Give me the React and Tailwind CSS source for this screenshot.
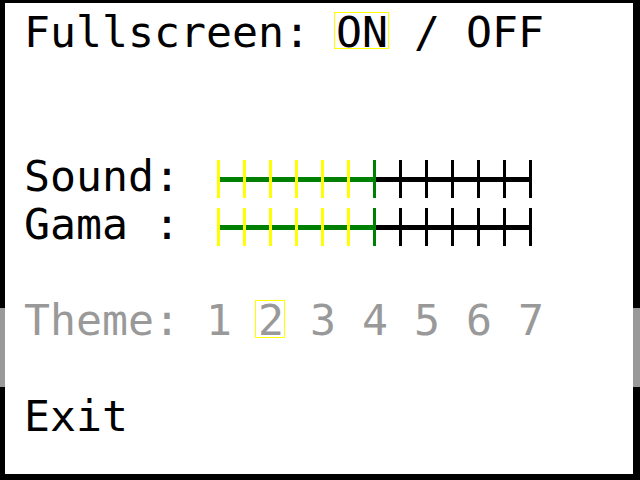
import React from "react";

function Slider() {
  const ticks = Array.from({ length: 13 }, (_, k) => k);
  const color = (k) => (k < 6 ? "#ffff00" : k === 6 ? "#008000" : "#000000");
  return (
    <svg width="315" height="38" viewBox="0 0 315 38" className="mt-[8px] block">
      <rect x="0" y="17" width="159" height="5" fill="#008000" />
      <rect x="159" y="17" width="156" height="5" fill="#000000" />
      {ticks.map((k) => (
        <rect key={k} x={k * 26} y="0" width="3" height="38" fill={color(k)} />
      ))}
    </svg>
  );
}

function Row({ children, className = "" }) {
  return <div className={"h-[48px] " + className}>{children}</div>;
}

export default function App() {
  const font = { fontFamily: '"DejaVu Sans Mono", "Liberation Mono", monospace' };
  const themes = ["1", "2", "3", "4", "5", "6", "7"];
  return (
    <div className="relative w-[640px] h-[480px]">
      <div
        className="w-full h-full border-solid border-black border-t-[3px] border-l-[5px] border-r-[7px] border-b-[6px] bg-white pt-[5px] pl-[19px] text-black text-[43.19px] leading-[48px] whitespace-pre flex flex-col"
        style={font}
      >
        <Row>
          Fullscreen:{" "}
          <span className="relative inline-block h-[48px] align-top">
            ON
            <span className="absolute left-[-2px] top-[4px] w-[55px] h-[37px] border border-[#ffff00]" />
          </span>
          {" / OFF"}
        </Row>
        <Row />
        <Row />
        <Row className="flex items-start">
          <span className="w-[193px] shrink-0">Sound:</span>
          <Slider />
        </Row>
        <Row className="flex items-start">
          <span className="w-[193px] shrink-0">Gama :</span>
          <Slider />
        </Row>
        <Row />
        <Row className="flex text-[#999999]">
          <span className="w-[182px] shrink-0">Theme:</span>
          <div className="flex gap-[26px]">
            {themes.map((t) => (
              <span key={t} className="relative w-[26px] h-[48px] block">
                {t}
                {t === "2" && (
                  <span className="absolute left-[-3px] top-[4px] w-[30px] h-[38px] border border-[#ffff00]" />
                )}
              </span>
            ))}
          </div>
        </Row>
        <Row />
        <Row>Exit</Row>
      </div>
      <div className="absolute left-0 top-[308px] w-[5px] h-[79px] bg-[#999999]" />
      <div className="absolute right-0 top-[308px] w-[7px] h-[79px] bg-[#999999]" />
    </div>
  );
}
